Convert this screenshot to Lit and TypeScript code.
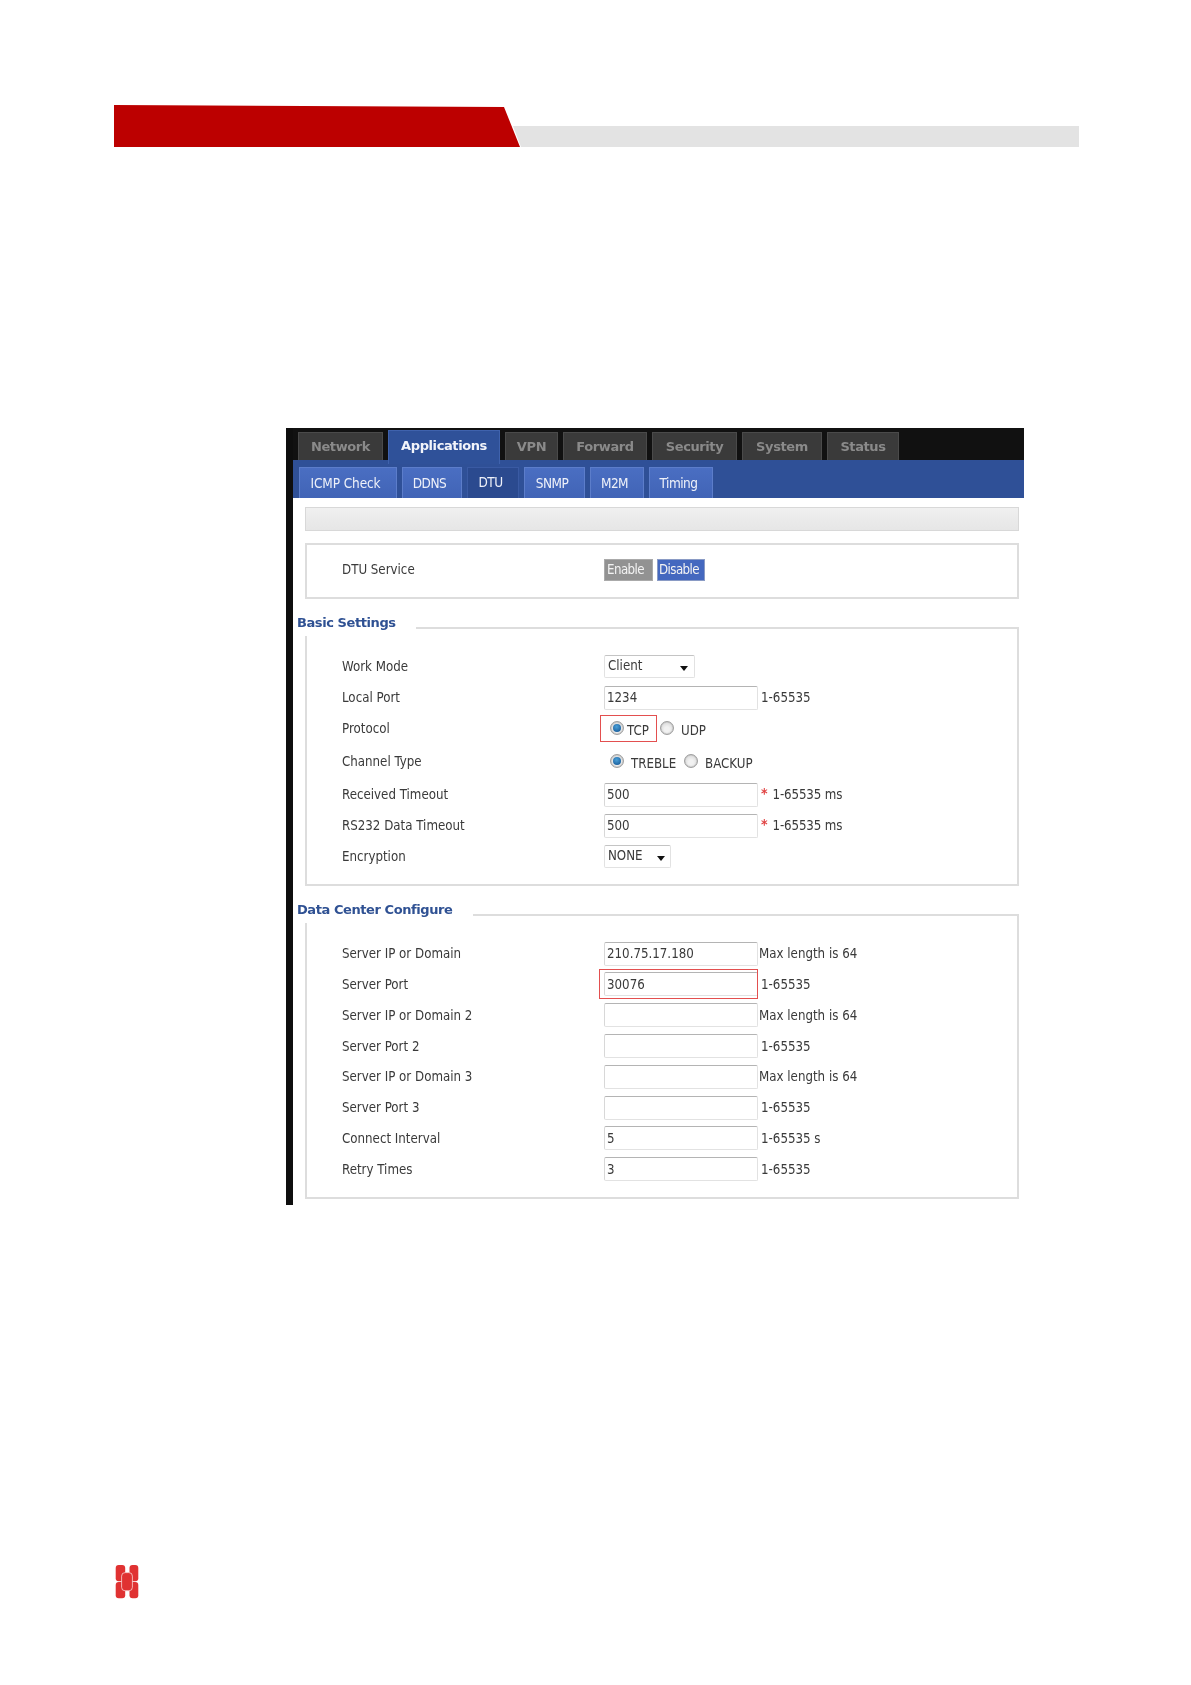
import { LitElement, html, css, nothing } from "lit";
import { customElement } from "lit/decorators.js";

interface Row {
  label: string;
  value?: string;
  hint?: string;
  star?: boolean;
  mark?: boolean;
  narrow?: boolean;
}

const dataRows: Row[] = [
  { label: "Server IP or Domain", value: "210.75.17.180", hint: "Max length is 64", narrow: true },
  { label: "Server Port", value: "30076", hint: "1-65535", mark: true },
  { label: "Server IP or Domain 2", value: "", hint: "Max length is 64", narrow: true },
  { label: "Server Port 2", value: "", hint: "1-65535" },
  { label: "Server IP or Domain 3", value: "", hint: "Max length is 64", narrow: true },
  { label: "Server Port 3", value: "", hint: "1-65535" },
  { label: "Connect Interval", value: "5", hint: "1-65535 s" },
  { label: "Retry Times", value: "3", hint: "1-65535" },
];

@customElement("app-root")
export class AppRoot extends LitElement {
  static styles = css`
    :host {
      display: block;
      width: 1191px;
      height: 1685px;
      overflow: hidden;
      background: #fff;
      font-family: "DejaVu Sans", sans-serif;
      font-stretch: condensed;
    }
    .page { padding-top: 105px; }
    .banner {
      display: flex;
      align-items: flex-end;
      margin-left: 114px;
      width: 965px;
      height: 42px;
    }
    .red {
      width: 406px;
      height: 42px;
      background: #bc0000;
      clip-path: polygon(0 0, 390px 2px, 406px 42px, 0 42px);
      flex: none;
    }
    .grey {
      flex: 1;
      height: 21px;
      margin-left: -7px;
      background: #e3e3e3;
      clip-path: polygon(0 0, 100% 0, 100% 100%, 8px 100%);
    }
    .shot {
      margin: 281px 0 0 286px;
      width: 731px;
      height: 777px;
      padding-left: 7px;
      background: #0e0e0e;
      filter: blur(0.45px);
    }
    .top {
      display: flex;
      align-items: flex-start;
      gap: 5px;
      height: 32px;
      padding-left: 5px;
      background: #111;
    }
    .top div {
      margin-top: 4px;
      height: 28px;
      box-sizing: border-box;
      padding-top: 6px;
      text-align: center;
      background: #3a3a3a;
      border: 1px solid #4a4a4a;
      border-bottom: none;
      color: #8a8a8a;
      font-size: 13px;
      font-weight: 700;
      font-stretch: normal;
      letter-spacing: -0.4px;
    }
    .top div.on {
      position: relative;
      z-index: 1;
      margin-top: 2px;
      height: 34px;
      padding-top: 7px;
      background: #2f5199;
      border-color: #3f62ad;
      color: #f2f4fa;
    }
    .sub {
      display: flex;
      align-items: flex-end;
      gap: 5px;
      height: 38px;
      padding-left: 6px;
      background: #2f5097;
    }
    .sub div {
      height: 31px;
      box-sizing: border-box;
      padding: 7px 5px 0 0;
      text-align: center;
      background: linear-gradient(#4a6ec2, #4164b6);
      border: 1px solid #5c7dca;
      border-bottom: none;
      color: #eef1f9;
      font-size: 13.5px;
      letter-spacing: -0.5px;
      white-space: nowrap;
    }
    .sub div.wide { letter-spacing: -0.1px; }
    .sub div.on {
      padding-top: 6px;
      background: #2b4a8f;
      border-color: #3a5aa3;
    }
    .content {
      height: 707px;
      box-sizing: border-box;
      padding: 9px 5px 0 12px;
      background: #fff;
      color: #3a3a3a;
      font-size: 13.2px;
    }
    .bar {
      height: 24px;
      box-sizing: border-box;
      background: linear-gradient(#f0f0f0, #e6e6e6);
      border: 1px solid #d8d8d8;
    }
    .service {
      display: grid;
      grid-template-columns: 262px 1fr;
      align-items: center;
      margin-top: 12px;
      height: 56px;
      box-sizing: border-box;
      padding: 0 0 3px 35px;
      border: 2px solid #ddd;
    }
    .btns { display: flex; gap: 4px; }
    .btn {
      box-sizing: border-box;
      width: 49px;
      height: 22px;
      padding-right: 6px;
      line-height: 20px;
      text-align: center;
      color: #f3f3f3;
      letter-spacing: -0.6px;
      background: #929292;
      border: 1px solid #aaa;
    }
    .btn.on { width: 48px; padding-right: 4px; background: #4468bf; border-color: #8a9bc5; }
    section {
      position: relative;
      margin-top: 28px;
      box-sizing: border-box;
      border: 2px solid #ddd;
      padding-left: 35px;
    }
    .basic { padding-top: 22px; height: 259px; }
    .center { padding-top: 22.3px; height: 285px; }
    .legend {
      position: absolute;
      left: -10px;
      top: -15px;
      padding: 1px 0 2px 0;
      height: 19px;
      background: #fff;
      color: #2f5193;
      font-size: 13px;
      font-weight: 700;
      font-stretch: normal;
      letter-spacing: -0.42px;
    }
    .basic .legend { width: 119px; }
    .center .legend { width: 176px; }
    .row {
      display: grid;
      grid-template-columns: 262px 1fr;
      align-items: center;
      height: 31px;
    }
    .row.proto { height: 30px; }
    .row.channel { height: 36px; }
    .center .row { height: 30.8px; }
    .field { display: flex; align-items: center; }
    input {
      display: block;
      width: 154px;
      height: 24px;
      box-sizing: border-box;
      margin: 0;
      padding: 0 2px;
      border: 1px solid #e2e2e2;
      border-top-color: #b4b4b4;
      border-left-color: #d8d8d8;
      border-radius: 2px;
      outline: none;
      background: #fff;
      color: #3a3a3a;
      font: inherit;
      font-stretch: condensed;
    }
    .select {
      display: flex;
      align-items: center;
      justify-content: space-between;
      box-sizing: border-box;
      height: 23px;
      padding: 0 6px 2px 3px;
      border: 1px solid #e2e2e2;
      border-top-color: #c4c4c4;
      border-radius: 2px;
    }
    .select.wide { width: 91px; }
    .select.small { width: 67px; padding-right: 5px; }
    .caret {
      width: 0;
      height: 0;
      margin-top: 5px;
      border: 4px solid transparent;
      border-top: 5px solid #111;
      border-bottom: none;
    }
    .hint { margin-left: 3px; white-space: nowrap; }
    .hint.narrow { margin-left: 1px; }
    .star {
      margin: -4px 5px 0 3px;
      color: #e04040;
      font-size: 14px;
      font-weight: 700;
    }
    .star + .hint { margin-left: 0; letter-spacing: -0.15px; }
    .marked {
      margin-left: -5px;
      padding: 3px 0 3px 5px;
      outline: 1.5px solid #e34f4f;
      outline-offset: -1px;
    }
    .radio {
      flex: none;
      position: relative;
      box-sizing: border-box;
      width: 14px;
      height: 14px;
      border-radius: 50%;
      border: 1px solid #a0a0a0;
      background: radial-gradient(circle at 50% 60%, #f2f2f2 25%, #cfcfcf 100%);
      box-shadow: inset 0 0 1px #888;
    }
    .radio.on::after {
      content: "";
      position: absolute;
      left: 2px;
      top: 2px;
      width: 8px;
      height: 8px;
      border-radius: 50%;
      background: radial-gradient(circle at 45% 35%, #4aa0d8, #0f4f8e);
    }
    .radios { display: flex; align-items: center; margin-left: 6px; }
    .opt { margin-top: 4px; white-space: nowrap; }
    .hl {
      display: flex;
      align-items: center;
      box-sizing: border-box;
      width: 57px;
      height: 27px;
      margin-left: -10px;
      padding-left: 10px;
      outline: 1.5px solid #e34f4f;
      outline-offset: -1px;
    }
    .hl .opt { margin-left: 3px; }
    .udp { margin-left: 3px; }
    .udp-t { margin-left: 7px; }
    .tre { margin-left: 7px; width: 53px; }
    .bak-t { margin-left: 7px; }
    .logo { display: block; margin: 360px 0 0 115px; }
  `;

  private input(r: Row) {
    const box = html`<input .value=${r.value ?? ""} />`;
    return r.mark ? html`<div class="marked">${box}</div>` : box;
  }

  render() {
    return html`
      <div class="page">
        <div class="banner"><div class="red"></div><div class="grey"></div></div>
        <div class="shot">
          <div class="top">
            <div style="width:85px">Network</div>
            <div class="on" style="width:112px">Applications</div>
            <div style="width:53px">VPN</div>
            <div style="width:84px">Forward</div>
            <div style="width:85px">Security</div>
            <div style="width:80px">System</div>
            <div style="width:72px">Status</div>
          </div>
          <div class="sub">
            <div class="wide" style="width:98px">ICMP Check</div>
            <div style="width:60px">DDNS</div>
            <div class="on" style="width:52px">DTU</div>
            <div style="width:61px">SNMP</div>
            <div style="width:54px">M2M</div>
            <div style="width:64px">Timing</div>
          </div>
          <div class="content">
            <div class="bar"></div>
            <div class="service">
              <div>DTU Service</div>
              <div class="btns"><div class="btn">Enable</div><div class="btn on">Disable</div></div>
            </div>
            <section class="basic">
              <div class="legend">Basic Settings</div>
              <div class="row">
                <div>Work Mode</div>
                <div class="field"><div class="select wide">Client<span class="caret"></span></div></div>
              </div>
              <div class="row">
                <div>Local Port</div>
                <div class="field"><input .value=${"1234"} /><span class="hint">1-65535</span></div>
              </div>
              <div class="row proto">
                <div>Protocol</div>
                <div class="radios">
                  <div class="hl"><span class="radio on"></span><span class="opt">TCP</span></div>
                  <span class="radio udp"></span><span class="opt udp-t">UDP</span>
                </div>
              </div>
              <div class="row channel">
                <div>Channel Type</div>
                <div class="radios">
                  <span class="radio on"></span><span class="opt tre">TREBLE</span>
                  <span class="radio"></span><span class="opt bak-t">BACKUP</span>
                </div>
              </div>
              <div class="row">
                <div>Received Timeout</div>
                <div class="field"><input .value=${"500"} /><span class="star">*</span><span class="hint">1-65535 ms</span></div>
              </div>
              <div class="row">
                <div>RS232 Data Timeout</div>
                <div class="field"><input .value=${"500"} /><span class="star">*</span><span class="hint">1-65535 ms</span></div>
              </div>
              <div class="row">
                <div>Encryption</div>
                <div class="field"><div class="select small">NONE<span class="caret"></span></div></div>
              </div>
            </section>
            <section class="center">
              <div class="legend">Data Center Configure</div>
              ${dataRows.map(
                (r) => html`<div class="row">
                  <div>${r.label}</div>
                  <div class="field">
                    ${this.input(r)}
                    ${r.hint ? html`<span class="hint ${r.narrow ? "narrow" : ""}">${r.hint}</span>` : nothing}
                  </div>
                </div>`
              )}
            </section>
          </div>
        </div>
        <svg class="logo" width="24" height="34" viewBox="0 0 24 34" aria-hidden="true">
          <g fill="#e03232">
            <rect x="0.7" y="0" width="9.5" height="16.3" rx="3" />
            <rect x="14.5" y="0" width="8.8" height="16.3" rx="3" />
            <rect x="0.7" y="17" width="9.5" height="16.3" rx="3" />
            <rect x="14.5" y="17" width="8.8" height="16.3" rx="3" />
            <rect x="6.6" y="7.6" width="10.8" height="18.2" rx="3.5" stroke="#f8d4d4" stroke-width="0.8" />
          </g>
        </svg>
      </div>
    `;
  }
}
